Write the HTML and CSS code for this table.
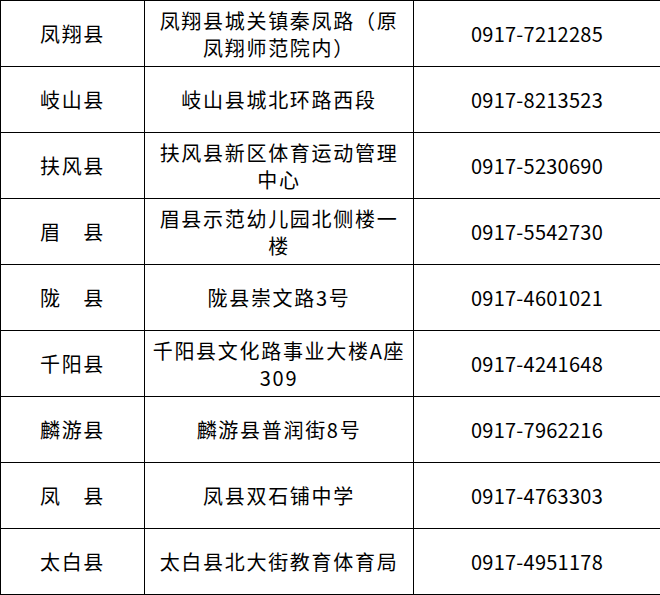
FILE: index.html
```html
<!DOCTYPE html>
<html lang="zh">
<head>
<meta charset="utf-8">
<link rel="stylesheet" href="styles.css">
</head>
<body>
<table class="list">
  <colgroup>
    <col class="c-county">
    <col class="c-addr">
    <col class="c-tel">
  </colgroup>
  <tbody>
    <tr><td class="county">凤翔县</td><td class="addr">凤翔县城关镇秦凤路（原凤翔师范院内）</td><td class="tel">0917-7212285</td></tr>
    <tr><td class="county">岐山县</td><td class="addr">岐山县城北环路西段</td><td class="tel">0917-8213523</td></tr>
    <tr><td class="county">扶风县</td><td class="addr">扶风县新区体育运动管理中心</td><td class="tel">0917-5230690</td></tr>
    <tr><td class="county">眉　县</td><td class="addr">眉县示范幼儿园北侧楼一楼</td><td class="tel">0917-5542730</td></tr>
    <tr><td class="county">陇　县</td><td class="addr">陇县崇文路3号</td><td class="tel">0917-4601021</td></tr>
    <tr><td class="county">千阳县</td><td class="addr">千阳县文化路事业大楼A座309</td><td class="tel">0917-4241648</td></tr>
    <tr><td class="county">麟游县</td><td class="addr">麟游县普润街8号</td><td class="tel">0917-7962216</td></tr>
    <tr><td class="county">凤　县</td><td class="addr">凤县双石铺中学</td><td class="tel">0917-4763303</td></tr>
    <tr><td class="county">太白县</td><td class="addr">太白县北大街教育体育局</td><td class="tel">0917-4951178</td></tr>
  </tbody>
</table>
</body>
</html>
```

FILE: styles.css
```css
html, body {
  margin: 0;
  padding: 0;
  background: #fff;
}

.list {
  border-collapse: collapse;
  table-layout: fixed;
  width: 660px;
  font-family: "Noto Sans CJK SC", "Noto Sans", sans-serif;
  font-size: 20px;
  color: #000;
}

.c-county { width: 144px; }
.c-addr { width: 269px; }
.c-tel { width: 247px; }

.list td {
  border: 1px solid #000;
  height: 66px;
  padding: 0 6px;
  text-align: center;
  vertical-align: middle;
  line-height: 27px;
  box-sizing: border-box;
}

.list td.county,
.list td.addr {
  letter-spacing: 1.7px;
}

.list td.tel {
  letter-spacing: 0.25px;
}
```
